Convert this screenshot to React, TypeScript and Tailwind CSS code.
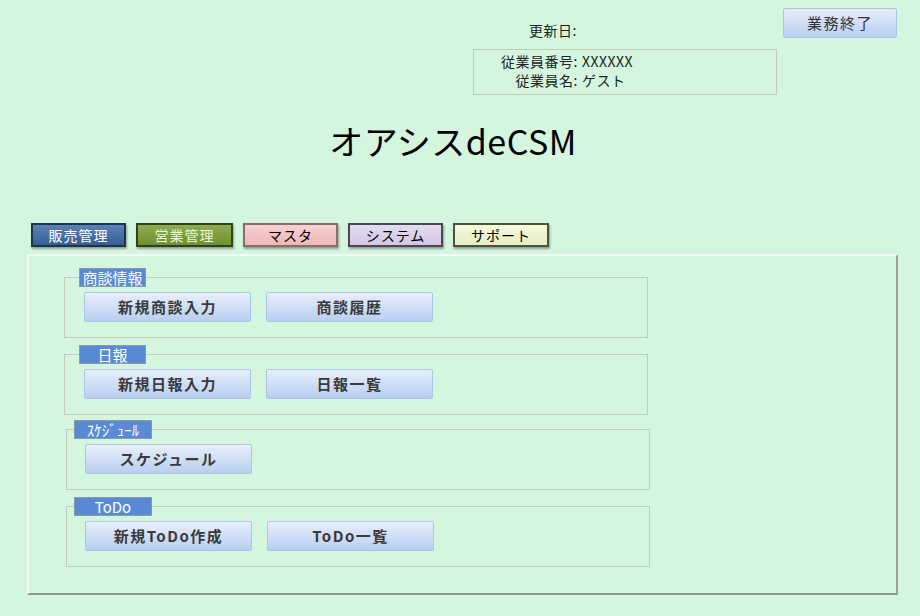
import React from 'react';

const jp = { fontFamily: '"Noto Sans CJK JP", "Liberation Sans", sans-serif' };

const tabs = [
  { label: '販売管理', cls: 'w-[95px] bg-gradient-to-b from-[#5a82b8] to-[#355f93] border-[#1f3350] text-white' },
  { label: '営業管理', cls: 'w-[97px] bg-gradient-to-b from-[#8fae4e] to-[#6f8f34] border-[#33401c] text-[#eaf7dc]' },
  { label: 'マスタ', cls: 'w-[95px] bg-gradient-to-b from-[#f8d0d0] to-[#efb7b7] border-[#8a6c6c] text-black' },
  { label: 'システム', cls: 'w-[95px] bg-gradient-to-b from-[#e4dcf0] to-[#d2c6e4] border-[#4a4658] text-black' },
  { label: 'サポート', cls: 'w-[96px] bg-gradient-to-b from-[#f4f8dc] to-[#e6eec4] border-[#4e5236] text-black' },
];

const groups = [
  { title: '商談情報', lw: 'w-[67px]', gap: '', pad: 'pl-[14px]', inner: 'ml-[5px]', items: ['新規商談入力', '商談履歴'] },
  { title: '日報', lw: 'w-[67px]', gap: 'mt-[7px]', pad: 'pl-[14px]', inner: 'ml-[5px]', items: ['新規日報入力', '日報一覧'] },
  { title: 'ｽｹｼﾞｭｰﾙ', lw: 'w-[78px]', gap: 'mt-[5px] ml-[2px]', pad: 'pl-[7px]', inner: 'ml-[11px]', items: ['スケジュール'] },
  { title: 'ToDo', lw: 'w-[78px]', gap: 'mt-[7px] ml-[2px]', pad: 'pl-[7px]', inner: 'ml-[11px]', items: ['新規ToDo作成', 'ToDo一覧'] },
];

const MenuButton: React.FC<{ label: string }> = ({ label }) => (
  <button
    className="w-[167px] h-[30px] rounded-[2px] border border-[#aec4e4] bg-gradient-to-b from-[#e8effb] to-[#b9cef0] text-[15px] font-semibold tracking-[1.5px] text-[#3a3a3a]"
    style={jp}
  >
    {label}
  </button>
);

export default function App() {
  return (
    <div className="w-[920px] h-[616px] bg-[#d4f6de] text-[#222] overflow-hidden" style={jp}>
      {/* header */}
      <div className="flex items-start pt-[8px]">
        <div className="w-[473px] shrink-0" />
        <div className="w-[304px] shrink-0 pt-[12px]">
          <div className="flex text-[14px] leading-[20px]">
            <span className="w-[104px] text-right tracking-[0.5px]">更新日:</span>
          </div>
          <div className="mt-[9px] h-[46px] border border-[#c4c8c4] pt-[2px] text-[14px] leading-[19px]">
            <div className="flex">
              <span className="w-[104px] text-right tracking-[0.5px]">従業員番号:</span>
              <span className="ml-[4px] tracking-[0.5px]">XXXXXX</span>
            </div>
            <div className="flex">
              <span className="w-[104px] text-right tracking-[0.5px]">従業員名:</span>
              <span className="ml-[4px] tracking-[0.5px]">ゲスト</span>
            </div>
          </div>
        </div>
        <button className="ml-[6px] w-[114px] h-[30px] rounded-[2px] border border-[#aec4e4] bg-gradient-to-b from-[#e8effb] to-[#b9cef0] text-[15px] tracking-[1.5px] text-[#333]">
          業務終了
        </button>
      </div>

      {/* title */}
      <div className="mt-[26px] flex justify-center pr-[14px]">
        <h1 className="text-[34px] leading-[40px] tracking-[0.5px] text-black">オアシスdeCSM</h1>
      </div>

      {/* tabs */}
      <div className="mt-[62px] ml-[31px] flex gap-[10px]">
        {tabs.map((t) => (
          <div
            key={t.label}
            className={`h-[24px] border-2 flex items-center justify-center text-[14px] tracking-[1px] shadow-[1px_2px_2px_rgba(0,0,0,0.35)] ${t.cls}`}
          >
            {t.label}
          </div>
        ))}
      </div>

      {/* panel */}
      <div className="mt-[7px] ml-[27px] w-[871px] h-[341px] border-2 border-t-[#f2fbf4] border-l-[#f2fbf4] border-r-[#9aa39c] border-b-[#8e968f] pt-[12px] pl-[35px]">
        {groups.map((g) => (
          <fieldset
            key={g.title}
            className={`w-[584px] border border-[#c6cac6] ${g.pad} pb-[15px] ${g.gap}`}
          >
            <legend className="text-left p-0">
              <span
                className={`block ${g.lw} h-[19px] bg-[#588ad6] border border-[#8c9aa8] text-white text-[15px] leading-[17px] text-center`}
              >
                {g.title}
              </span>
            </legend>
            <div className={`mt-[5px] flex gap-[15px] ${g.inner}`}>
              {g.items.map((it) => (
                <MenuButton key={it} label={it} />
              ))}
            </div>
          </fieldset>
        ))}
      </div>
    </div>
  );
}
